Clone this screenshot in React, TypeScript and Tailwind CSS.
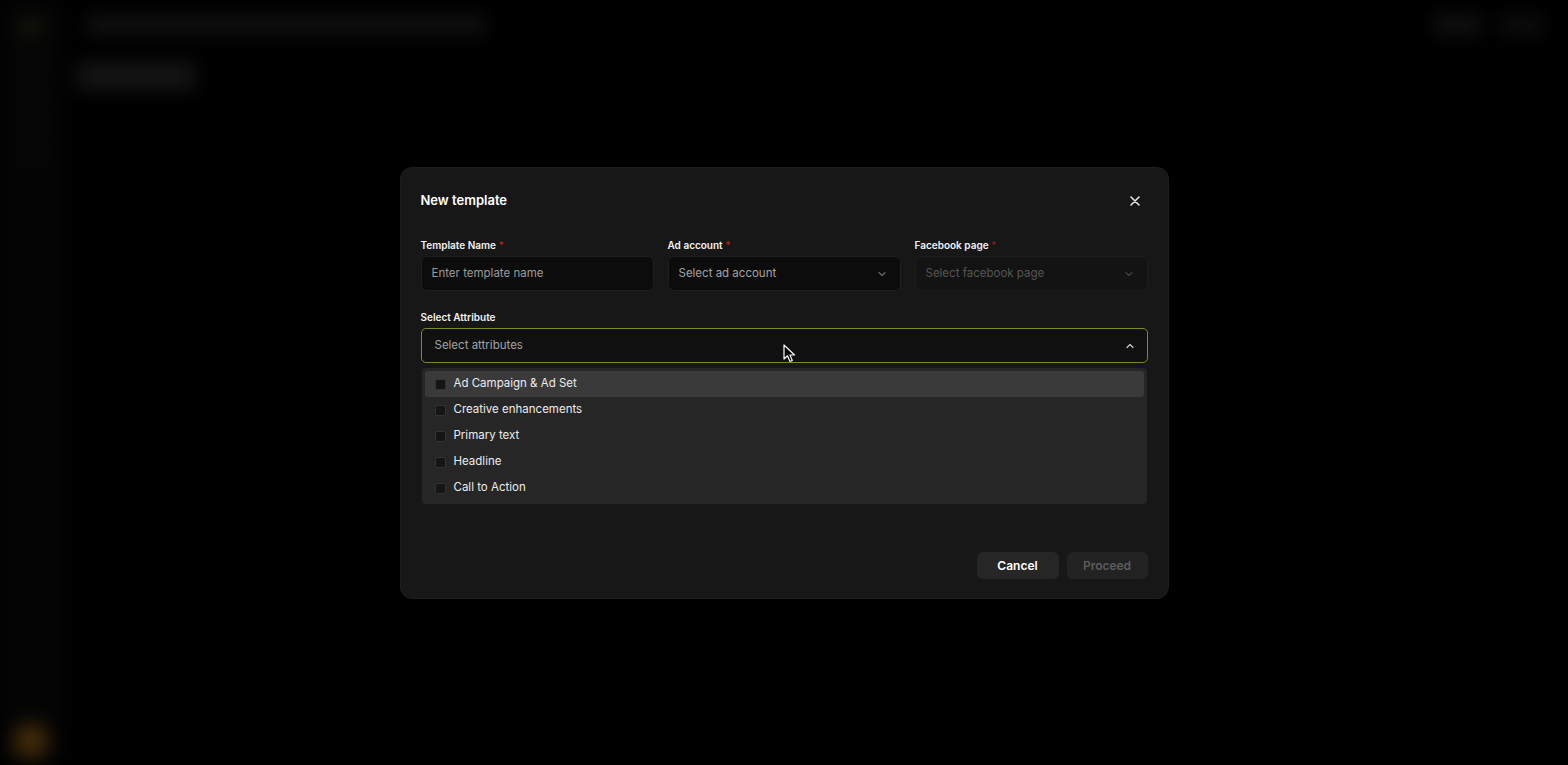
import React from "react";

const font = { fontFamily: "Inter, 'Noto Sans', sans-serif" };

function Chevron({ up = false, className = "" }: { up?: boolean; className?: string }) {
  return (
    <svg width="12" height="12" viewBox="0 0 24 24" fill="none" stroke="currentColor" strokeWidth="2.2" strokeLinecap="round" strokeLinejoin="round" className={className}>
      {up ? <path d="M6 15l6-6 6 6" /> : <path d="M6 9l6 6 6-6" />}
    </svg>
  );
}

function Background() {
  return (
    <div className="absolute inset-0 flex blur-[9px] opacity-60">
      <div className="w-[62px] h-full bg-[#080808] flex flex-col items-center pt-[14px] gap-[20px]">
        <div className="w-[26px] h-[26px] rounded-full bg-[#1c2010]" />
        <div className="w-[24px] h-[10px] rounded bg-[#121212]" />
        <div className="w-[24px] h-[10px] rounded bg-[#121212]" />
        <div className="w-[24px] h-[10px] rounded bg-[#121212]" />
        <div className="w-[24px] h-[10px] rounded bg-[#121212]" />
        <div className="flex-1" />
        <div className="w-[36px] h-[36px] rounded-full bg-[#6a4410] mb-[6px]" />
      </div>
      <div className="flex-1 flex flex-col">
        <div className="h-[50px] flex items-center px-[24px] gap-4">
          <div className="w-[400px] h-[22px] rounded bg-[#1a1a1a]" />
          <div className="flex-1" />
          <div className="w-[50px] h-[22px] rounded bg-[#1a1a1a]" />
          <div className="w-[46px] h-[22px] rounded bg-[#141414]" />
        </div>
        <div className="px-[14px] pt-[12px]">
          <div className="w-[120px] h-[28px] rounded bg-[#222222]" />
        </div>
      </div>
    </div>
  );
}

function Checkbox() {
  return <span className="w-[11px] h-[11px] rounded-[2px] bg-[#151515] border border-[#333333] shrink-0" />;
}

export default function App() {
  const items = [
    "Ad Campaign & Ad Set",
    "Creative enhancements",
    "Primary text",
    "Headline",
    "Call to Action",
  ];
  return (
    <div className="relative w-[1568px] h-[765px] bg-black overflow-hidden" style={font}>
      <Background />
      <div className="absolute inset-0 flex items-start justify-center pt-[167px]">
        <div className="w-[769px] h-[432px] rounded-[12px] bg-[#171717] border border-[#1e1e1e] px-[20px] pt-[22px] pb-[19px] flex flex-col">
          <div className="flex items-center justify-between h-[22px]">
            <h2 className="text-[13px] font-semibold text-white">New template</h2>
            <svg width="10" height="10" viewBox="0 0 10 10" stroke="#e5e5e5" strokeWidth="1.6" strokeLinecap="round" className="mr-[8px]">
              <path d="M1 1l8 8M9 1L1 9" />
            </svg>
          </div>

          <div className="grid grid-cols-3 gap-[14px] mt-[27px]">
            <div className="flex flex-col gap-[4px]">
              <label className="text-[10px] font-semibold text-[#f2f2f2] leading-[13px]">
                Template Name <span className="text-[#b91c1c]">*</span>
              </label>
              <div className="h-[35px] rounded-[6px] bg-[#0c0c0c] border border-[#1f1f1f] flex items-center px-[10px]">
                <span className="text-[11.5px] text-[#9a9a9a]">Enter template name</span>
              </div>
            </div>
            <div className="flex flex-col gap-[4px]">
              <label className="text-[10px] font-semibold text-[#f2f2f2] leading-[13px]">
                Ad account <span className="text-[#b91c1c]">*</span>
              </label>
              <div className="h-[35px] rounded-[6px] bg-[#0c0c0c] border border-[#1f1f1f] flex items-center justify-between pl-[10px] pr-[12px]">
                <span className="text-[11.5px] text-[#a3a3a3]">Select ad account</span>
                <Chevron className="text-[#6b6b6b]" />
              </div>
            </div>
            <div className="flex flex-col gap-[4px]">
              <label className="text-[10px] font-semibold text-[#f2f2f2] leading-[13px]">
                Facebook page <span className="text-[#7f1d1d]">*</span>
              </label>
              <div className="h-[35px] rounded-[6px] bg-[#131313] border border-[#1c1c1c] flex items-center justify-between pl-[10px] pr-[12px]">
                <span className="text-[11.5px] text-[#555555]">Select facebook page</span>
                <Chevron className="text-[#444444]" />
              </div>
            </div>
          </div>

          <div className="flex flex-col gap-[4px] mt-[20px]">
            <label className="text-[10px] font-semibold text-[#f2f2f2] leading-[13px]">Select Attribute</label>
            <div className="relative h-[35px] rounded-[5px] bg-[#101010] border border-[#7c8a2c] flex items-center justify-between pl-[13px] pr-[11px]">
              <span className="text-[11.5px] text-[#a3a3a3]">Select attributes</span>
              <Chevron up className="text-[#d4d4d4]" />
              <svg width="16" height="20" viewBox="0 0 16 20" className="absolute left-[361px] top-[15px]">
                <path d="M1 1 L1 15 L4.5 11.8 L7 17.5 L9.3 16.5 L6.9 11 L11.5 11 Z" fill="#000" stroke="#fff" strokeWidth="1.2" strokeLinejoin="round" />
              </svg>
            </div>
          </div>

          <div className="mt-[5px] mx-[1px] rounded-[4px] bg-[#262626] py-[3px] px-[3px] flex flex-col">
            {items.map((it, i) => (
              <div
                key={it}
                className={`h-[26px] rounded-[3px] flex items-center gap-[8px] pl-[10px] ${i === 0 ? "bg-[#3a3a3a]" : ""}`}
              >
                <Checkbox />
                <span className="text-[11.5px] text-[#ececec]">{it}</span>
              </div>
            ))}
          </div>

          <div className="flex-1" />
          <div className="flex justify-end gap-[8px]">
            <button className="w-[82px] h-[27px] rounded-[6px] bg-[#262626] text-[12px] font-semibold text-white">Cancel</button>
            <button className="w-[81px] h-[27px] rounded-[6px] bg-[#222222] text-[12px] font-semibold text-[#5c5c5c]">Proceed</button>
          </div>
        </div>
      </div>
    </div>
  );
}
